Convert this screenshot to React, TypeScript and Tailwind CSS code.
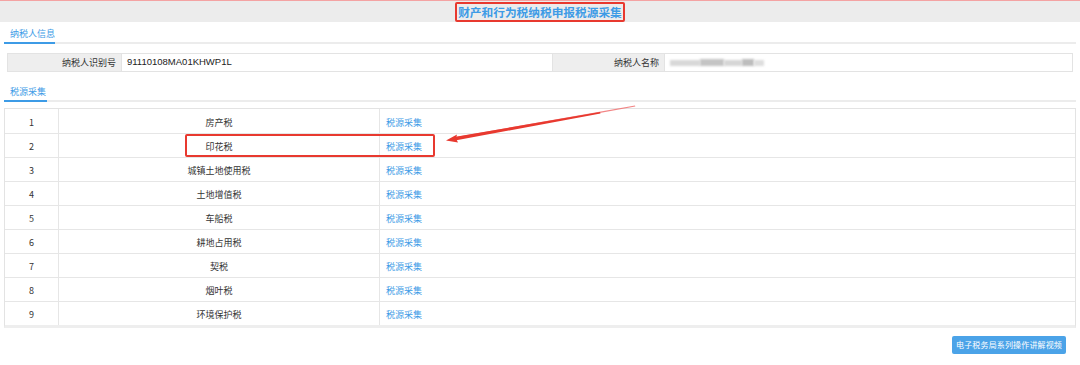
import React from "react"

type Row = {
 no: number
 name: string
}

const rows: Row[] = [
 { no: 1, name: "房产税" },
 { no: 2, name: "印花税" },
 { no: 3, name: "城镇土地使用税" },
 { no: 4, name: "土地增值税" },
 { no: 5, name: "车船税" },
 { no: 6, name: "耕地占用税" },
 { no: 7, name: "契税" },
 { no: 8, name: "烟叶税" },
 { no: 9, name: "环境保护税" }
]

function Tab({ label, width }: { label: string; width: string }) {
 return (
  <div className="border-b-2 border-[#ececec]">
   <div className={`${width} -mb-[2px] border-b-2 border-[#3d9be6] pl-[6px] pb-[2px] text-[9px] leading-[12px] text-[#3d9be6]`}>
    {label}
   </div>
  </div>
 )
}

export default function App() {
 return (
  <div
   className="relative h-[365px] w-[1080px] overflow-hidden bg-white text-[#333]"
   style={{ fontFamily: '"Noto Sans CJK SC", "Noto Sans", sans-serif' }}
  >
   <div className="h-px bg-[#f4a3a3]" />
   <div className="flex h-[21px] items-center justify-center bg-[#ececec]">
    <span className="mt-[1px] flex h-[20px] items-center rounded-[2px] border-2 border-[#e8392f] px-[1px] text-[11.7px] font-bold text-[#3d9be6]">
     财产和行为税纳税申报税源采集
    </span>
   </div>

   <div className="px-[4px]">
    <div className="mt-[6px]">
     <Tab label="纳税人信息" width="w-[51px]" />
    </div>

    <div className="mx-[3px] mt-[9px] grid h-[19px] grid-cols-[113px_431px_112px_1fr] border border-[#e3e3e3] text-[9px]">
     <div className="flex items-center justify-end bg-[#eeeeee] pr-[5px]">纳税人识别号</div>
     <div className="flex items-center border-l border-[#e3e3e3] pl-[5px] font-[Liberation_Sans] text-[9.5px] text-[#222]">
      91110108MA01KHWP1L
     </div>
     <div className="flex items-center justify-end border-l border-[#e3e3e3] bg-[#eeeeee] pr-[5px]">纳税人名称</div>
     <div className="flex items-center gap-0 border-l border-[#e3e3e3] pl-[5px]">
      <span className="h-[6px] w-[30px] bg-[#d8d8d8] blur-[1px]" />
      <span className="h-[7px] w-[24px] bg-[#c4c4c4] blur-[1px]" />
      <span className="h-[6px] w-[18px] bg-[#d6d6d6] blur-[1px]" />
      <span className="h-[7px] w-[12px] bg-[#bdbdbd] blur-[1px]" />
      <span className="h-[6px] w-[10px] bg-[#dedede] blur-[1px]" />
     </div>
    </div>

    <div className="mt-[14px]">
     <Tab label="税源采集" width="w-[43px]" />
    </div>

    <div className="mt-[6px] border border-[#e3e3e3] border-b-[3px] border-b-[#eeeeee] text-[9px]">
     {rows.map((r, i) => (
      <div
       key={r.no}
       className={`grid h-[24px] grid-cols-[53px_321px_1fr] ${i > 0 ? "border-t border-[#e6e6e6]" : ""}`}
      >
       <div className="flex items-center justify-center pt-[3px]">{r.no}</div>
       <div className="flex items-center justify-center border-l border-[#e6e6e6] pt-[3px]">{r.name}</div>
       <div className="flex items-center border-l border-[#e6e6e6] pl-[6px] pt-[3px] text-[#3d9be6]">税源采集</div>
      </div>
     ))}
    </div>

    <div className="mt-[8px] flex justify-end pr-[10px]">
     <button className="h-[18px] rounded-[2px] bg-[#4ba3e8] px-[4px] text-[8px] tracking-[0.15px] leading-[18px] text-white">
      电子税务局系列操作讲解视频
     </button>
    </div>
   </div>

   {/* annotation overlay */}
   <div className="pointer-events-none absolute left-[185px] top-[134px] h-[23px] w-[250px] rounded-[2px] border-2 border-[#e8392f]" />
   <svg className="pointer-events-none absolute left-0 top-0" width="1080" height="365">
    <polygon points="635,105.5 635.3,106.5 455,139.5 454.3,137.3" fill="#f07070" opacity="0.85" />
    <polygon points="600,112 600.5,113.5 455,140.5 454.3,137" fill="#e8392f" />
    <polygon points="446,140.5 457,134.5 456,138.5 458,142.5" fill="#e8392f" />
   </svg>
  </div>
 )
}
